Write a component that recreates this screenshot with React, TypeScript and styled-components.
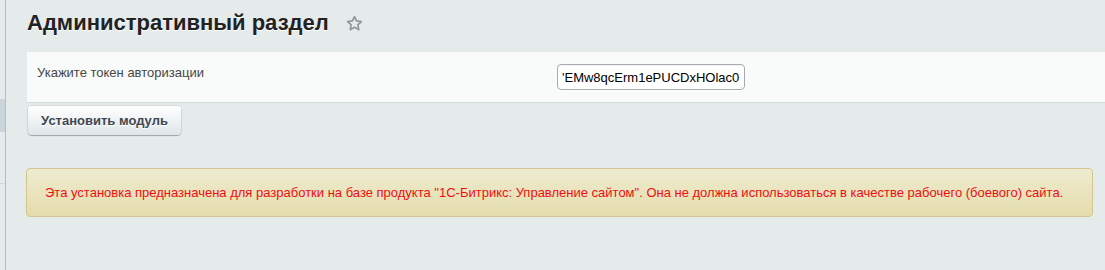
import React from "react";
import styled, { createGlobalStyle } from "styled-components";

const Global = createGlobalStyle`
  html, body { margin: 0; padding: 0; }
  body {
    background: #e5eaeb;
    font-family: "Liberation Sans", Arial, sans-serif;
    width: 1105px;
    height: 270px;
    overflow: hidden;
  }
`;

const Page = styled.div`
  display: flex;
  height: 270px;
`;

const Sidebar = styled.div`
  width: 5px;
  flex: none;
  border-right: 1px solid #aebfcc;
  display: flex;
  flex-direction: column;
`;

const SideGap = styled.div<{ $h: number }>`
  height: ${(p) => p.$h}px;
  flex: none;
`;

const SideBlock = styled.div`
  height: 33px;
  background: #cbd4da;
`;

const SideLine = styled.div`
  height: 1px;
  background: #cfd8de;
`;

const Main = styled.div`
  flex: 1;
  display: flex;
  flex-direction: column;
  padding-left: 21px;
`;

const TitleRow = styled.div`
  display: flex;
  align-items: center;
  height: 46px;
  margin-bottom: 6px;
`;

const Title = styled.h1`
  margin: 0;
  font-size: 22px;
  font-weight: bold;
  color: #222;
  text-shadow: 0 1px 0 #fff;
  line-height: 46px;
`;

const Star = styled.svg`
  margin-left: 16px;
  margin-top: 1px;
`;

const Panel = styled.div`
  background: #f9fafa;
  border-bottom: 1px solid #d5dcde;
  height: 50px;
  display: grid;
  grid-template-columns: 530px 1fr;
  align-items: start;
`;

const Label = styled.div`
  padding: 13px 0 0 10px;
  font-size: 13px;
  color: #474747;
`;

const TokenInput = styled.input`
  margin-top: 12px;
  width: 188px;
  height: 26px;
  box-sizing: border-box;
  border: 1px solid #a4abb2;
  border-radius: 4px;
  background: #fff;
  font-family: "Liberation Sans", Arial, sans-serif;
  font-size: 13px;
  color: #000;
  padding: 0 4px;
  outline: none;
  box-shadow: 0 1px 0 #fff, inset 0 1px 1px rgba(0,0,0,0.05);
`;

const Button = styled.button`
  align-self: flex-start;
  margin: 3px 0 0 1px;
  width: 153px;
  height: 29px;
  border: none;
  border-radius: 4px;
  background: linear-gradient(#ffffff, #dfe6e9);
  box-shadow: 0 1px 1px rgba(0,0,0,0.25), 0 0 0 1px rgba(180,190,195,0.35), inset 0 1px 0 #fff;
  font-family: "Liberation Sans", Arial, sans-serif;
  font-size: 13px;
  font-weight: bold;
  color: #3d4850;
  text-shadow: 0 1px 0 #fff;
  cursor: pointer;
  padding: 0;
`;

const Notice = styled.div`
  margin: 33px 12px 0 -1px;
  height: 49px;
  box-sizing: border-box;
  border: 1px solid #d2c58f;
  border-radius: 4px;
  background: linear-gradient(#eeecd0, #e4dcab);
  display: flex;
  align-items: center;
  padding: 0 0 0 18px;
  font-size: 13px;
  color: #f20d0d;
`;

export default function App() {
  return (
    <>
      <Global />
      <Page>
        <Sidebar>
          <SideGap $h={99} />
          <SideBlock />
          <SideGap $h={51} />
          <SideLine />
        </Sidebar>
        <Main>
          <TitleRow>
            <Title>Административный раздел</Title>
            <Star width="19" height="19" viewBox="0 0 24 24">
              <path
                d="M12 3.2l2.6 5.6 6.1.7-4.5 4.2 1.2 6.1L12 16.8l-5.4 3 1.2-6.1-4.5-4.2 6.1-.7z"
                fill="none"
                stroke="#8f9aa0"
                strokeWidth="2.2"
                strokeLinejoin="round"
              />
            </Star>
          </TitleRow>
          <Panel>
            <Label>Укажите токен авторизации</Label>
            <TokenInput type="text" defaultValue="'EMw8qcErm1ePUCDxHOlac0" />
          </Panel>
          <Button>Установить модуль</Button>
          <Notice>
            Эта установка предназначена для разработки на базе продукта "1С-Битрикс: Управление сайтом". Она не должна использоваться в качестве рабочего (боевого) сайта.
          </Notice>
        </Main>
      </Page>
    </>
  );
}
